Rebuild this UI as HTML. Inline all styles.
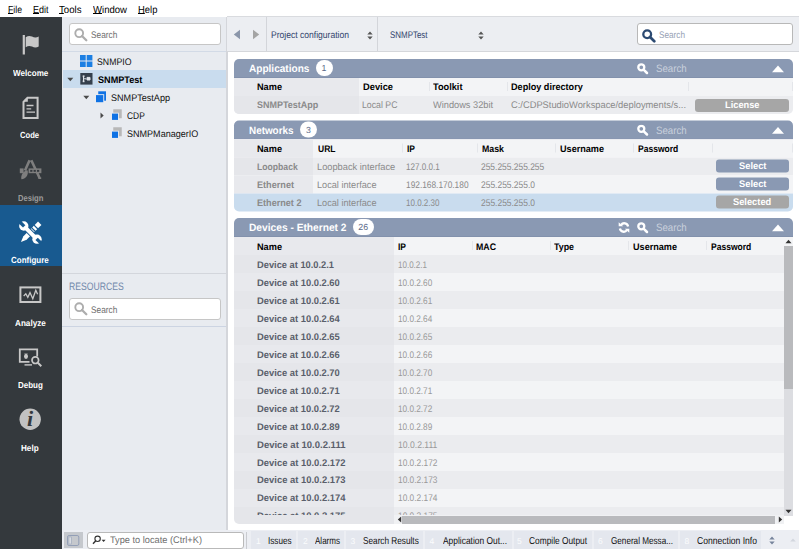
<!DOCTYPE html><html><head><meta charset="utf-8"><title>CDP Studio</title><style>
*{box-sizing:border-box;margin:0;padding:0}
html,body{width:800px;height:551px;overflow:hidden;background:#fff}
body{position:relative;text-rendering:geometricPrecision;font-family:"Liberation Sans",sans-serif;font-size:9.6px;color:#000}
.a{position:absolute;white-space:nowrap}
.t{position:absolute;white-space:nowrap;line-height:12px;height:12px;transform-origin:0 50%}
.b{font-weight:bold}
u{text-decoration:underline;text-underline-offset:0px;text-decoration-thickness:1px;text-decoration-skip-ink:none}
.m{font-size:10.2px;color:#000}
.tr{color:#111}
.sl{color:#fff;font-weight:bold;font-size:8.8px}
.ls{color:#6e6e6e;font-size:9.6px}
.tb{color:#31446c;font-size:9.6px}
.pt{color:#fff;font-weight:bold;font-size:10.6px}
.hs{color:#c9d0dc;font-size:10.6px}
.h{font-weight:bold;color:#000}
.g{color:#8a8a8a}
.gb{color:#8a8a8a;font-weight:bold}
.db{color:#5a5f6b;font-weight:bold}
.bt{color:#fff;font-weight:bold;font-size:9.6px}
.tt{color:#111;font-size:10px}
.tn{color:#fbfcfd;font-size:8.5px}
#side{left:0;top:17px;width:62px;height:532px;background:#34393d}
#left{left:62px;top:17px;width:164px;height:514px;background:#e8ebf0}
.inp{position:absolute;background:#fff;border:1px solid #c6c6c6;border-radius:3px}
#tb{left:227px;top:16px;width:572px;height:36px;background:#eceef2;border-top:1px solid #d9dbdf;border-bottom:1px solid #d5d7db}
.vs{position:absolute;width:1px;background:#d3d5da}
.ph{position:absolute;background:#8a99b3;border-radius:5px 5px 0 0;height:19px;left:234px;width:559px;border-bottom:1px solid #8291ac}
.bd{position:absolute;background:#fff;border-radius:8px}
.row{position:absolute;left:234px;width:559px;height:18px}
.btn{position:absolute;height:13px;border-radius:3px}
.cs{position:absolute;width:1px;height:9px;background:#e4e6ea}
#bb{left:62px;top:530px;width:737px;height:19px;background:#eceef3}
.tab{position:absolute;top:531px;height:18px;background:#e4e7ee}
</style></head><body>
<div class="t m" style="left:8.00px;top:5px;transform:scaleX(0.852);"><u>F</u>ile</div>
<div class="t m" style="left:33.00px;top:5px;transform:scaleX(0.883);"><u>E</u>dit</div>
<div class="t m" style="left:58.50px;top:5px;transform:scaleX(0.946);"><u>T</u>ools</div>
<div class="t m" style="left:92.50px;top:5px;transform:scaleX(0.938);"><u>W</u>indow</div>
<div class="t m" style="left:138.00px;top:5px;transform:scaleX(0.925);"><u>H</u>elp</div>
<div id="side" class="a"></div>
<div class="a" style="left:0;top:205px;width:62px;height:61px;background:#185a90"></div>
<div class="t sl" style="left:12.60px;top:66.7px;transform:scaleX(0.918);color:#fff">Welcome</div>
<div class="t sl" style="left:20.40px;top:129.0px;transform:scaleX(0.868);color:#fff">Code</div>
<div class="t sl" style="left:18.00px;top:191.7px;transform:scaleX(0.866);color:#9b9b9b">Design</div>
<div class="t sl" style="left:11.40px;top:254.0px;transform:scaleX(0.907);color:#fff">Configure</div>
<div class="t sl" style="left:15.30px;top:316.7px;transform:scaleX(0.926);color:#fff">Analyze</div>
<div class="t sl" style="left:18.00px;top:378.9px;transform:scaleX(0.910);color:#fff">Debug</div>
<div class="t sl" style="left:21.30px;top:441.5px;transform:scaleX(0.923);color:#fff">Help</div>
<svg class="a" style="left:0;top:17px" width="62" height="532" viewBox="0 17 62 532">
<rect x="22.7" y="35" width="2.2" height="19.5" fill="#c8c8c8"/><path d="M25.7 37.2 C28 35.6 30 35.6 32 36.6 C34.3 37.8 36.5 37.8 38.7 36.6 V46.6 C36.5 47.8 34.3 47.8 32 46.6 C30 45.6 28 45.6 25.7 47.2 Z" fill="#c8c8c8"/>
<path d="M27.5 97.8 H37.6 V117.9 H23.5 V101.8 Z" fill="none" stroke="#c8c8c8" stroke-width="2"/><path d="M23 101.8 L27.8 97 V101.8 Z" fill="#c8c8c8"/>
<path d="M26.5 105.5 H33.5 M26.5 108.8 H31.2 M26.5 112.1 H35" stroke="#c8c8c8" stroke-width="1.3" fill="none"/>
<path d="M29.6 160.3 L25 170.5 M31.3 160.3 L39.6 178" stroke="#7e7e7e" stroke-width="2.6" fill="none"/><path d="M37.8 177.2 H41.2 V179 H38.6 Z" fill="#7e7e7e"/><rect x="19.8" y="168.4" width="3.8" height="4.8" fill="#7e7e7e"/><rect x="28.6" y="168.4" width="12.8" height="4.8" fill="#7e7e7e"/><path d="M21.3 179.3 C20.6 174.6 23.6 170.6 27.4 170.2 C29 173.6 26.4 179 21.3 179.3 Z" fill="#7e7e7e"/><rect x="30.2" y="169.9" width="2.2" height="1.9" fill="#34393d"/><rect x="33.6" y="169.9" width="2.2" height="1.9" fill="#34393d"/><rect x="37" y="169.9" width="2.2" height="1.9" fill="#34393d"/>
<g transform="translate(30.4 232.6) scale(0.88) rotate(-45)" fill="#fff">
<path d="M-15.2 0 L-8.8 -2.7 V2.7 Z"/><rect x="-9.3" y="-2.7" width="13.5" height="5.4"/><rect x="5.6" y="-2.7" width="2.6" height="5.4"/><rect x="9.6" y="-2.7" width="5.4" height="5.4"/>
</g>
<g transform="translate(30.4 232.6) scale(0.88) rotate(45)">
<rect x="-9" y="-3.4" width="18" height="6.8" fill="#185a90"/>
<circle cx="-10.6" cy="0" r="5.3" fill="#fff"/><circle cx="10.6" cy="0" r="5.3" fill="#fff"/><rect x="-10" y="-2.3" width="20" height="4.6" fill="#fff"/>
<rect x="-17" y="-1.9" width="7" height="3.8" fill="#185a90"/><rect x="10" y="-1.9" width="7" height="3.8" fill="#185a90"/>
</g>
<rect x="20.4" y="287.4" width="20" height="14.6" fill="none" stroke="#c8c8c8" stroke-width="2"/><path d="M23.7 296 L25.8 293.8 L27.8 297.3 L30 292.6 L32.8 298.8 L35.8 290.3 L37.6 294.3" fill="none" stroke="#c8c8c8" stroke-width="1.3"/>
<path d="M37.2 356.5 V349.3 H19.8 V361.8 H29.5" fill="none" stroke="#c8c8c8" stroke-width="1.8"/><path d="M24.5 364.9 H32" stroke="#c8c8c8" stroke-width="1.4"/><circle cx="35.3" cy="360.2" r="3.3" fill="none" stroke="#c8c8c8" stroke-width="1.7"/><path d="M37.8 362.8 L41.3 366.2" stroke="#c8c8c8" stroke-width="2"/><ellipse cx="26" cy="356.3" rx="2" ry="2.6" fill="#c8c8c8"/><path d="M24.8 353.2 L25.5 354 M27.2 353.2 L26.5 354" stroke="#c8c8c8" stroke-width="0.8"/>
<circle cx="30.2" cy="419.3" r="10.7" fill="#c2c2c2"/>
</svg>
<div class="a" style="left:20px;top:406px;width:20px;height:26px;text-align:center;font-family:'Liberation Serif',serif;font-style:italic;font-weight:bold;font-size:22px;line-height:26px;color:#34393d">i</div>
<div id="left" class="a"></div>
<div class="a" style="left:62px;top:51px;width:164px;height:1px;background:#d2dae6"></div>
<div class="a" style="left:226px;top:17px;width:2px;height:513px;background:#d4d6db"></div>
<div class="inp" style="left:69px;top:23px;width:152px;height:22px"></div>
<svg class="a" style="left:74px;top:28px" width="14.0" height="14.0" viewBox="0 0 14 14"><circle cx="5.2" cy="5.2" r="3.9" fill="none" stroke="#adadad" stroke-width="1.9"/><path d="M8 8 L12.3 12.3" stroke="#adadad" stroke-width="2.3" stroke-linecap="round"/></svg>
<div class="t ls" style="left:90.50px;top:30px;transform:scaleX(0.863);">Search</div>
<div class="a" style="left:63px;top:70px;width:163px;height:18px;background:#c9dcee"></div>
<svg class="a" style="left:80px;top:55px" width="13" height="12" viewBox="0 0 13 12"><rect x="0" y="0" width="5.7" height="5.5" fill="#1c7fe3"/><rect x="6.7" y="0" width="5.7" height="5.5" fill="#1c7fe3"/><rect x="0" y="6.5" width="5.7" height="5.5" fill="#1c7fe3"/><rect x="6.7" y="6.5" width="5.7" height="5.5" fill="#1c7fe3"/></svg>
<div class="t tr" style="left:96.80px;top:57px;transform:scaleX(0.911);">SNMPIO</div>
<svg class="a" style="left:67px;top:77px" width="7" height="5" viewBox="0 0 7 5"><path d="M0.3 0.8 H6.3 L3.3 4.2 Z" fill="#4a4a4a"/></svg>
<svg class="a" style="left:80px;top:73px" width="13" height="12" viewBox="0 0 13 12"><rect x="0.3" y="0" width="12.2" height="11.6" fill="#35404d"/><path d="M3.5 3 V8.6 M3.5 5.8 H6.2 M7 4.4 H10 V7 H7 Z" stroke="#dfe4ea" stroke-width="1" fill="#dfe4ea"/><rect x="2.7" y="2.4" width="1.8" height="1.8" fill="#dfe4ea"/><rect x="2.7" y="7.4" width="1.8" height="1.8" fill="#dfe4ea"/></svg>
<div class="t tr b" style="left:97.60px;top:75px;transform:scaleX(0.948);color:#000">SNMPTest</div>
<svg class="a" style="left:83px;top:95px" width="7" height="5" viewBox="0 0 7 5"><path d="M0.3 0.8 H6.3 L3.3 4.2 Z" fill="#4a4a4a"/></svg>
<svg class="a" style="left:96px;top:90.8px" width="11" height="12" viewBox="0 0 11 12"><rect x="2.25" y="0.3" width="7.75" height="9.4" fill="#0f72e4"/><rect x="0" y="3.2" width="8.2" height="8.2" fill="#e8ebf0"/><rect x="0" y="4.1" width="7.25" height="7.1" fill="#0f72e4"/></svg>
<div class="t tr" style="left:111.00px;top:93px;transform:scaleX(0.946);">SNMPTestApp</div>
<svg class="a" style="left:100px;top:111.5px" width="4" height="7" viewBox="0 0 4 7"><path d="M0.5 0.4 V6.4 L3.7 3.4 Z" fill="#4a4a4a"/></svg>
<svg class="a" style="left:112px;top:109px" width="11" height="12" viewBox="0 0 11 12"><rect x="1.25" y="0.25" width="8.5" height="9" fill="#b8b8b8"/><rect x="0" y="3.7" width="6.9" height="7.4" fill="#e8ebf0"/><rect x="0" y="4.6" width="6" height="6.3" fill="#0f72e4"/></svg>
<div class="t tr" style="left:127.00px;top:111px;transform:scaleX(0.880);">CDP</div>
<svg class="a" style="left:112px;top:127px" width="11" height="12" viewBox="0 0 11 12"><rect x="1.25" y="0.25" width="8.5" height="9" fill="#b8b8b8"/><rect x="0" y="3.7" width="6.9" height="7.4" fill="#e8ebf0"/><rect x="0" y="4.6" width="6" height="6.3" fill="#0f72e4"/></svg>
<div class="t tr" style="left:127.00px;top:129px;transform:scaleX(0.942);">SNMPManagerIO</div>
<div class="a" style="left:62px;top:273px;width:164px;height:1px;background:#d3d6dc"></div>
<div class="t ls" style="left:69.00px;top:280.6px;transform:scaleX(0.800);color:#7188ab;font-size:10.8px">RESOURCES</div>
<div class="inp" style="left:69px;top:298px;width:152px;height:22px"></div>
<svg class="a" style="left:74px;top:302px" width="14.0" height="14.0" viewBox="0 0 14 14"><circle cx="5.2" cy="5.2" r="3.9" fill="none" stroke="#adadad" stroke-width="1.9"/><path d="M8 8 L12.3 12.3" stroke="#adadad" stroke-width="2.3" stroke-linecap="round"/></svg>
<div class="t ls" style="left:90.50px;top:305px;transform:scaleX(0.863);">Search</div>
<div class="a" style="left:62px;top:326px;width:164px;height:1px;background:#ccd4e2"></div>
<div id="tb" class="a"></div>
<div class="vs" style="left:266px;top:17px;height:34px"></div>
<div class="vs" style="left:377px;top:17px;height:34px"></div>
<svg class="a" style="left:233px;top:29px" width="8" height="11" viewBox="0 0 8 11"><path d="M7 0.8 V10.2 L0.8 5.5 Z" fill="#8b96aa"/></svg>
<svg class="a" style="left:252px;top:29px" width="8" height="11" viewBox="0 0 8 11"><path d="M1 0.8 V10.2 L7.2 5.5 Z" fill="#a4a4a4"/></svg>
<div class="t tb" style="left:270.75px;top:30px;transform:scaleX(0.892);">Project configuration</div>
<svg class="a" style="left:367px;top:30.5px" width="6" height="9" viewBox="0 0 6 9"><path d="M0.3 3.6 L3 0.5 L5.7 3.6 Z M0.3 5.4 L3 8.5 L5.7 5.4 Z" fill="#555"/></svg>
<div class="t tb" style="left:389.50px;top:30px;transform:scaleX(0.828);">SNMPTest</div>
<svg class="a" style="left:478px;top:30.5px" width="6" height="9" viewBox="0 0 6 9"><path d="M0.3 3.6 L3 0.5 L5.7 3.6 Z M0.3 5.4 L3 8.5 L5.7 5.4 Z" fill="#555"/></svg>
<div class="inp" style="left:637px;top:23px;width:156px;height:22px;border-color:#b8b8b8"></div>
<svg class="a" style="left:642px;top:28.5px" width="14.0" height="14.0" viewBox="0 0 14 14"><circle cx="5.2" cy="5.2" r="3.9" fill="none" stroke="#2c4a72" stroke-width="2.3"/><path d="M8 8 L12.3 12.3" stroke="#2c4a72" stroke-width="2.6999999999999997" stroke-linecap="round"/></svg>
<div class="t tb" style="left:658.70px;top:30px;transform:scaleX(0.855);color:#96a1b5">Search</div>
<div class="ph" style="top:59px"></div>
<div class="t pt" style="left:248.80px;top:62.6px;transform:scaleX(0.950);">Applications</div>
<div class="bd" style="left:315.5px;top:60.3px;width:17px;height:16px"></div>
<div class="t tn" style="left:321.55px;top:61.6px;transform:scaleX(1.000);color:#5a6988;font-size:8.8px">1</div>
<svg class="a" style="left:637px;top:63px" width="12" height="12" viewBox="0 0 12 12"><circle cx="4.3" cy="4.3" r="3" fill="none" stroke="#fff" stroke-width="2.3"/><path d="M6.8 6.8 L10 10" stroke="#fff" stroke-width="2.5" stroke-linecap="round"/></svg>
<div class="t hs" style="left:655.50px;top:62.8px;transform:scaleX(0.916);">Search</div>
<svg class="a" style="left:772px;top:64.5px" width="12" height="8" viewBox="0 0 12 8"><path d="M0 7.3 L6 0.4 L12 7.3 Z" fill="#fff"/></svg>
<div class="row" style="top:78px;height:18px;background:#f3f4f6;"></div>
<div class="a" style="left:234px;top:78px;width:125px;height:18px;background:#e8e9ed;"></div>
<div class="row" style="top:96px;height:18px;background:#ebecef;border-radius:0 0 5px 5px;"></div>
<div class="a" style="left:234px;top:96px;width:125px;height:18px;background:#e5e6ea;border-radius:0 0 0 5px;"></div>
<div class="t h" style="left:257.40px;top:82px;transform:scaleX(0.956);">Name</div>
<div class="t h" style="left:362.50px;top:82px;transform:scaleX(0.970);">Device</div>
<div class="t h" style="left:433.00px;top:82px;transform:scaleX(0.960);">Toolkit</div>
<div class="t h" style="left:511.20px;top:82px;transform:scaleX(0.948);">Deploy directory</div>
<div class="t gb" style="left:256.50px;top:100px;transform:scaleX(0.937);">SNMPTestApp</div>
<div class="t g" style="left:362.00px;top:100px;transform:scaleX(0.912);">Local PC</div>
<div class="t g" style="left:432.50px;top:100px;transform:scaleX(0.962);">Windows 32bit</div>
<div class="t g" style="left:510.50px;top:100px;transform:scaleX(0.972);">C:/CDPStudioWorkspace/deployments/s...</div>
<div class="btn" style="left:695px;width:94px;top:98.5px;background:#a6a6a6"></div>
<div class="t bt" style="left:724.75px;top:99.5px;transform:scaleX(0.965);">License</div>
<div class="cs" style="left:429px;top:82px"></div>
<div class="cs" style="left:507px;top:82px"></div>
<div class="cs" style="left:688px;top:82px"></div>
<div class="cs" style="left:792px;top:82px"></div>
<div class="a" style="left:0;top:0;width:800px;height:551px;transform:translateY(-0.5px)">
<div class="ph" style="top:121px"></div>
<div class="t pt" style="left:248.80px;top:124.6px;transform:scaleX(0.933);">Networks</div>
<div class="bd" style="left:300px;top:122.3px;width:17px;height:16px"></div>
<div class="t tn" style="left:306.05px;top:123.6px;transform:scaleX(1.000);color:#5a6988;font-size:8.8px">3</div>
<svg class="a" style="left:637px;top:125px" width="12" height="12" viewBox="0 0 12 12"><circle cx="4.3" cy="4.3" r="3" fill="none" stroke="#fff" stroke-width="2.3"/><path d="M6.8 6.8 L10 10" stroke="#fff" stroke-width="2.5" stroke-linecap="round"/></svg>
<div class="t hs" style="left:655.50px;top:124.8px;transform:scaleX(0.916);">Search</div>
<svg class="a" style="left:772px;top:126.5px" width="12" height="8" viewBox="0 0 12 8"><path d="M0 7.3 L6 0.4 L12 7.3 Z" fill="#fff"/></svg>
<div class="row" style="top:140px;height:18px;background:#f3f4f6;"></div>
<div class="a" style="left:234px;top:140px;width:79px;height:18px;background:#e8e9ed;"></div>
<div class="row" style="top:158px;height:18px;background:#ebecef;"></div>
<div class="a" style="left:234px;top:158px;width:79px;height:18px;background:#e5e6ea;"></div>
<div class="row" style="top:176px;height:18px;background:#f3f4f6;"></div>
<div class="a" style="left:234px;top:176px;width:79px;height:18px;background:#e8e9ed;"></div>
<div class="row" style="top:194px;height:18px;background:#c9dcee;border-radius:0 0 5px 5px;"></div>
<div class="t h" style="left:257.40px;top:144px;transform:scaleX(0.956);">Name</div>
<div class="t h" style="left:317.50px;top:144px;transform:scaleX(0.887);">URL</div>
<div class="t h" style="left:406.80px;top:144px;transform:scaleX(0.881);">IP</div>
<div class="t h" style="left:481.50px;top:144px;transform:scaleX(0.917);">Mask</div>
<div class="t h" style="left:559.60px;top:144px;transform:scaleX(0.948);">Username</div>
<div class="t h" style="left:637.50px;top:144px;transform:scaleX(0.888);">Password</div>
<div class="t gb" style="left:256.70px;top:162px;transform:scaleX(0.899);">Loopback</div>
<div class="t g" style="left:316.70px;top:162px;transform:scaleX(0.965);">Loopback interface</div>
<div class="t g" style="left:406.20px;top:162px;transform:scaleX(0.843);">127.0.0.1</div>
<div class="t g" style="left:480.50px;top:162px;transform:scaleX(0.878);">255.255.255.255</div>
<div class="btn" style="left:716px;width:73px;top:160px;background:#8a99b3"></div>
<div class="t bt" style="left:738.75px;top:161px;transform:scaleX(0.972);">Select</div>
<div class="t gb" style="left:256.70px;top:180px;transform:scaleX(0.951);">Ethernet</div>
<div class="t g" style="left:316.70px;top:180px;transform:scaleX(0.953);">Local interface</div>
<div class="t g" style="left:406.20px;top:180px;transform:scaleX(0.868);">192.168.170.180</div>
<div class="t g" style="left:480.50px;top:180px;transform:scaleX(0.880);">255.255.255.0</div>
<div class="btn" style="left:716px;width:73px;top:178px;background:#8a99b3"></div>
<div class="t bt" style="left:738.75px;top:179px;transform:scaleX(0.972);">Select</div>
<div class="t gb" style="left:256.70px;top:198px;transform:scaleX(0.948);">Ethernet 2</div>
<div class="t g" style="left:316.70px;top:198px;transform:scaleX(0.953);">Local interface</div>
<div class="t g" style="left:406.20px;top:198px;transform:scaleX(0.837);">10.0.2.30</div>
<div class="t g" style="left:480.50px;top:198px;transform:scaleX(0.880);">255.255.255.0</div>
<div class="btn" style="left:716px;width:73px;top:196px;background:#a6a6a6"></div>
<div class="t bt" style="left:733.38px;top:197px;transform:scaleX(0.969);">Selected</div>
<div class="cs" style="left:402px;top:144px"></div>
<div class="cs" style="left:477px;top:144px"></div>
<div class="cs" style="left:555px;top:144px"></div>
<div class="cs" style="left:633px;top:144px"></div>
<div class="cs" style="left:712px;top:144px"></div>
<div class="cs" style="left:792px;top:144px"></div>
</div>
<div class="ph" style="top:218px"></div>
<div class="t pt" style="left:248.80px;top:221.6px;transform:scaleX(0.963);">Devices - Ethernet 2</div>
<div class="bd" style="left:352.5px;top:219.3px;width:21.5px;height:16px"></div>
<div class="t tn" style="left:358.35px;top:220.6px;transform:scaleX(1.000);color:#5a6988;font-size:8.8px">26</div>
<svg class="a" style="left:637px;top:222px" width="12" height="12" viewBox="0 0 12 12"><circle cx="4.3" cy="4.3" r="3" fill="none" stroke="#fff" stroke-width="2.3"/><path d="M6.8 6.8 L10 10" stroke="#fff" stroke-width="2.5" stroke-linecap="round"/></svg>
<div class="t hs" style="left:655.50px;top:221.8px;transform:scaleX(0.916);">Search</div>
<svg class="a" style="left:772px;top:223.5px" width="12" height="8" viewBox="0 0 12 8"><path d="M0 7.3 L6 0.4 L12 7.3 Z" fill="#fff"/></svg>
<svg class="a" style="left:617.5px;top:222.3px" width="12" height="11" viewBox="0 0 12 11"><g transform="translate(12 0) scale(-1 1)"><path d="M1.9 4.4 A3.9 3.9 0 0 1 8.9 2.9" fill="none" stroke="#fff" stroke-width="2.3"/><path d="M10.1 6.6 A3.9 3.9 0 0 1 3.1 8.1" fill="none" stroke="#fff" stroke-width="2.3"/><path d="M6.9 4.3 H11.3 V0.2 Z" fill="#fff"/><path d="M5.1 6.7 H0.7 V10.8 Z" fill="#fff"/></g></svg>
<div class="row" style="top:237px;height:18px;background:#f3f4f6;"></div>
<div class="a" style="left:234px;top:237px;width:160px;height:18px;background:#e8e9ed;"></div>
<div class="t h" style="left:257.40px;top:242px;transform:scaleX(0.956);">Name</div>
<div class="t h" style="left:398.00px;top:242px;transform:scaleX(0.881);">IP</div>
<div class="t h" style="left:476.20px;top:242px;transform:scaleX(0.915);">MAC</div>
<div class="t h" style="left:554.20px;top:242px;transform:scaleX(0.922);">Type</div>
<div class="t h" style="left:632.50px;top:242px;transform:scaleX(0.948);">Username</div>
<div class="t h" style="left:710.50px;top:242px;transform:scaleX(0.888);">Password</div>
<div class="row" style="top:255px;height:18px;background:#ebecef;"></div>
<div class="a" style="left:234px;top:255px;width:160px;height:18px;background:#e5e6ea;"></div>
<div class="t db" style="left:256.70px;top:260px;transform:scaleX(0.969);">Device at 10.0.2.1</div>
<div class="t g" style="left:397.50px;top:260px;transform:scaleX(0.836);color:#999">10.0.2.1</div>
<div class="row" style="top:273px;height:18px;background:#f3f4f6;"></div>
<div class="a" style="left:234px;top:273px;width:160px;height:18px;background:#e8e9ed;"></div>
<div class="t db" style="left:256.70px;top:278px;transform:scaleX(0.976);">Device at 10.0.2.60</div>
<div class="t g" style="left:397.50px;top:278px;transform:scaleX(0.855);color:#999">10.0.2.60</div>
<div class="row" style="top:291px;height:18px;background:#ebecef;"></div>
<div class="a" style="left:234px;top:291px;width:160px;height:18px;background:#e5e6ea;"></div>
<div class="t db" style="left:256.70px;top:296px;transform:scaleX(0.976);">Device at 10.0.2.61</div>
<div class="t g" style="left:397.50px;top:296px;transform:scaleX(0.855);color:#999">10.0.2.61</div>
<div class="row" style="top:309px;height:18px;background:#f3f4f6;"></div>
<div class="a" style="left:234px;top:309px;width:160px;height:18px;background:#e8e9ed;"></div>
<div class="t db" style="left:256.70px;top:314px;transform:scaleX(0.976);">Device at 10.0.2.64</div>
<div class="t g" style="left:397.50px;top:314px;transform:scaleX(0.855);color:#999">10.0.2.64</div>
<div class="row" style="top:327px;height:18px;background:#ebecef;"></div>
<div class="a" style="left:234px;top:327px;width:160px;height:18px;background:#e5e6ea;"></div>
<div class="t db" style="left:256.70px;top:332px;transform:scaleX(0.976);">Device at 10.0.2.65</div>
<div class="t g" style="left:397.50px;top:332px;transform:scaleX(0.855);color:#999">10.0.2.65</div>
<div class="row" style="top:345px;height:18px;background:#f3f4f6;"></div>
<div class="a" style="left:234px;top:345px;width:160px;height:18px;background:#e8e9ed;"></div>
<div class="t db" style="left:256.70px;top:350px;transform:scaleX(0.976);">Device at 10.0.2.66</div>
<div class="t g" style="left:397.50px;top:350px;transform:scaleX(0.855);color:#999">10.0.2.66</div>
<div class="row" style="top:363px;height:18px;background:#ebecef;"></div>
<div class="a" style="left:234px;top:363px;width:160px;height:18px;background:#e5e6ea;"></div>
<div class="t db" style="left:256.70px;top:368px;transform:scaleX(0.976);">Device at 10.0.2.70</div>
<div class="t g" style="left:397.50px;top:368px;transform:scaleX(0.855);color:#999">10.0.2.70</div>
<div class="row" style="top:381px;height:18px;background:#f3f4f6;"></div>
<div class="a" style="left:234px;top:381px;width:160px;height:18px;background:#e8e9ed;"></div>
<div class="t db" style="left:256.70px;top:386px;transform:scaleX(0.976);">Device at 10.0.2.71</div>
<div class="t g" style="left:397.50px;top:386px;transform:scaleX(0.855);color:#999">10.0.2.71</div>
<div class="row" style="top:399px;height:18px;background:#ebecef;"></div>
<div class="a" style="left:234px;top:399px;width:160px;height:18px;background:#e5e6ea;"></div>
<div class="t db" style="left:256.70px;top:404px;transform:scaleX(0.976);">Device at 10.0.2.72</div>
<div class="t g" style="left:397.50px;top:404px;transform:scaleX(0.855);color:#999">10.0.2.72</div>
<div class="row" style="top:417px;height:18px;background:#f3f4f6;"></div>
<div class="a" style="left:234px;top:417px;width:160px;height:18px;background:#e8e9ed;"></div>
<div class="t db" style="left:256.70px;top:422px;transform:scaleX(0.976);">Device at 10.0.2.89</div>
<div class="t g" style="left:397.50px;top:422px;transform:scaleX(0.855);color:#999">10.0.2.89</div>
<div class="row" style="top:435px;height:18px;background:#ebecef;"></div>
<div class="a" style="left:234px;top:435px;width:160px;height:18px;background:#e5e6ea;"></div>
<div class="t db" style="left:256.70px;top:440px;transform:scaleX(0.993);">Device at 10.0.2.111</div>
<div class="t g" style="left:397.50px;top:440px;transform:scaleX(0.897);color:#999">10.0.2.111</div>
<div class="row" style="top:453px;height:18px;background:#f3f4f6;"></div>
<div class="a" style="left:234px;top:453px;width:160px;height:18px;background:#e8e9ed;"></div>
<div class="t db" style="left:256.70px;top:458px;transform:scaleX(0.982);">Device at 10.0.2.172</div>
<div class="t g" style="left:397.50px;top:458px;transform:scaleX(0.869);color:#999">10.0.2.172</div>
<div class="row" style="top:471px;height:18px;background:#ebecef;"></div>
<div class="a" style="left:234px;top:471px;width:160px;height:18px;background:#e5e6ea;"></div>
<div class="t db" style="left:256.70px;top:475px;transform:scaleX(0.982);">Device at 10.0.2.173</div>
<div class="t g" style="left:397.50px;top:475px;transform:scaleX(0.869);color:#999">10.0.2.173</div>
<div class="row" style="top:489px;height:18px;background:#f3f4f6;"></div>
<div class="a" style="left:234px;top:489px;width:160px;height:18px;background:#e8e9ed;"></div>
<div class="t db" style="left:256.70px;top:493px;transform:scaleX(0.982);">Device at 10.0.2.174</div>
<div class="t g" style="left:397.50px;top:493px;transform:scaleX(0.869);color:#999">10.0.2.174</div>
<div class="a" style="left:234px;top:507px;width:550px;height:9px;background:#ebecef"></div><div class="a" style="left:234px;top:507px;width:160px;height:9px;background:#e5e6ea"></div>
<div class="a" style="left:234px;top:507px;width:550px;height:8px;overflow:hidden">
<div class="t db" style="left:22.70px;top:4px;transform:scaleX(0.982);">Device at 10.0.2.175</div>
<div class="t g" style="left:163.50px;top:4px;transform:scaleX(0.869);color:#999">10.0.2.175</div>
</div>
<div class="a" style="left:234px;top:515px;width:160px;height:9px;background:#e5e6ea;border-radius:0 0 0 5px"></div>
<div class="a" style="left:394px;top:515px;width:390px;height:9px;background:#f0f1f3"></div>
<div class="a" style="left:402px;top:516px;width:373px;height:8px;background:#b9babd"></div>
<svg class="a" style="left:397px;top:516px" width="5" height="7" viewBox="0 0 5 7"><path d="M4.2 0.6 V6.4 L0.8 3.5 Z" fill="#333"/></svg>
<svg class="a" style="left:778px;top:516px" width="5" height="7" viewBox="0 0 5 7"><path d="M0.8 0.6 V6.4 L4.2 3.5 Z" fill="#333"/></svg>
<div class="a" style="left:784px;top:237px;width:9px;height:279px;background:#dcdde1"></div>
<div class="a" style="left:784px;top:237px;width:9px;height:9px;background:#f3f4f6"></div>
<div class="a" style="left:784px;top:246px;width:9px;height:143px;background:#b9babd"></div>
<svg class="a" style="left:785px;top:239px" width="7" height="5" viewBox="0 0 7 5"><path d="M0.5 4.2 H6.5 L3.5 0.8 Z" fill="#333"/></svg>
<svg class="a" style="left:785px;top:509px" width="7" height="5" viewBox="0 0 7 5"><path d="M0.5 0.8 H6.5 L3.5 4.2 Z" fill="#333"/></svg>
<div class="cs" style="left:472px;top:241px"></div>
<div class="cs" style="left:550px;top:241px"></div>
<div class="cs" style="left:628px;top:241px"></div>
<div class="cs" style="left:706px;top:241px"></div>
<div id="bb" class="a"></div>
<div class="a" style="left:64px;top:532px;width:19px;height:16px;background:#c5c8cd"></div>
<svg class="a" style="left:67px;top:535px" width="13" height="11" viewBox="0 0 13 11"><rect x="0.5" y="0.5" width="11.3" height="10" rx="1.6" fill="none" stroke="#8d9ab4" stroke-width="0.9"/><rect x="1.9" y="2" width="2.4" height="7" fill="#d9dce2" stroke="#9aa5bb" stroke-width="0.6"/></svg>
<div class="inp" style="left:87px;top:532px;width:157px;height:17px;border-color:#b9b9b9"></div>
<svg class="a" style="left:92px;top:535px" width="14" height="11" viewBox="0 0 14 11"><circle cx="5.6" cy="3.8" r="2.7" fill="none" stroke="#333" stroke-width="1.1"/><path d="M3.8 5.8 L1 8.8" stroke="#333" stroke-width="1.4"/><path d="M9.6 4.8 H13.6 L11.6 7.1 Z" fill="#333"/></svg>
<div class="t ls" style="left:110.00px;top:535px;transform:scaleX(0.961);">Type to locate (Ctrl+K)</div>
<div class="a" style="left:246px;top:532px;width:1px;height:17px;background:#c9cbd0"></div>
<div class="tab" style="left:251px;width:45px"></div>
<div class="t tn" style="left:256.00px;top:534.5px;transform:scaleX(1.000);">1</div>
<div class="t tt" style="left:267.50px;top:536px;transform:scaleX(0.813);">Issues</div>
<div class="tab" style="left:298px;width:46px"></div>
<div class="t tn" style="left:303.00px;top:534.5px;transform:scaleX(1.000);">2</div>
<div class="t tt" style="left:315.00px;top:536px;transform:scaleX(0.803);">Alarms</div>
<div class="tab" style="left:346px;width:77px"></div>
<div class="t tn" style="left:350.50px;top:534.5px;transform:scaleX(1.000);">3</div>
<div class="t tt" style="left:363.00px;top:536px;transform:scaleX(0.822);">Search Results</div>
<div class="tab" style="left:425px;width:87px"></div>
<div class="t tn" style="left:429.50px;top:534.5px;transform:scaleX(1.000);">4</div>
<div class="t tt" style="left:443.00px;top:536px;transform:scaleX(0.840);">Application Out...</div>
<div class="tab" style="left:514px;width:78px"></div>
<div class="t tn" style="left:517.00px;top:534.5px;transform:scaleX(1.000);">5</div>
<div class="t tt" style="left:529.00px;top:536px;transform:scaleX(0.835);">Compile Output</div>
<div class="tab" style="left:594px;width:84px"></div>
<div class="t tn" style="left:598.00px;top:534.5px;transform:scaleX(1.000);">6</div>
<div class="t tt" style="left:610.50px;top:536px;transform:scaleX(0.814);">General Messa...</div>
<div class="tab" style="left:680px;width:81px"></div>
<div class="t tn" style="left:684.50px;top:534.5px;transform:scaleX(1.000);">8</div>
<div class="t tt" style="left:697.00px;top:536px;transform:scaleX(0.856);">Connection Info</div>
<svg class="a" style="left:769px;top:535.5px" width="6" height="9" viewBox="0 0 6 9"><path d="M0.3 3.6 L3 0.5 L5.7 3.6 Z M0.3 5.4 L3 8.5 L5.7 5.4 Z" fill="#77849c"/></svg>
<svg class="a" style="left:790px;top:538px" width="6" height="4" viewBox="0 0 8 5"><path d="M0.3 4.5 L4 0.5 L7.7 4.5 Z" fill="#d2d6de"/></svg>
</body></html>
